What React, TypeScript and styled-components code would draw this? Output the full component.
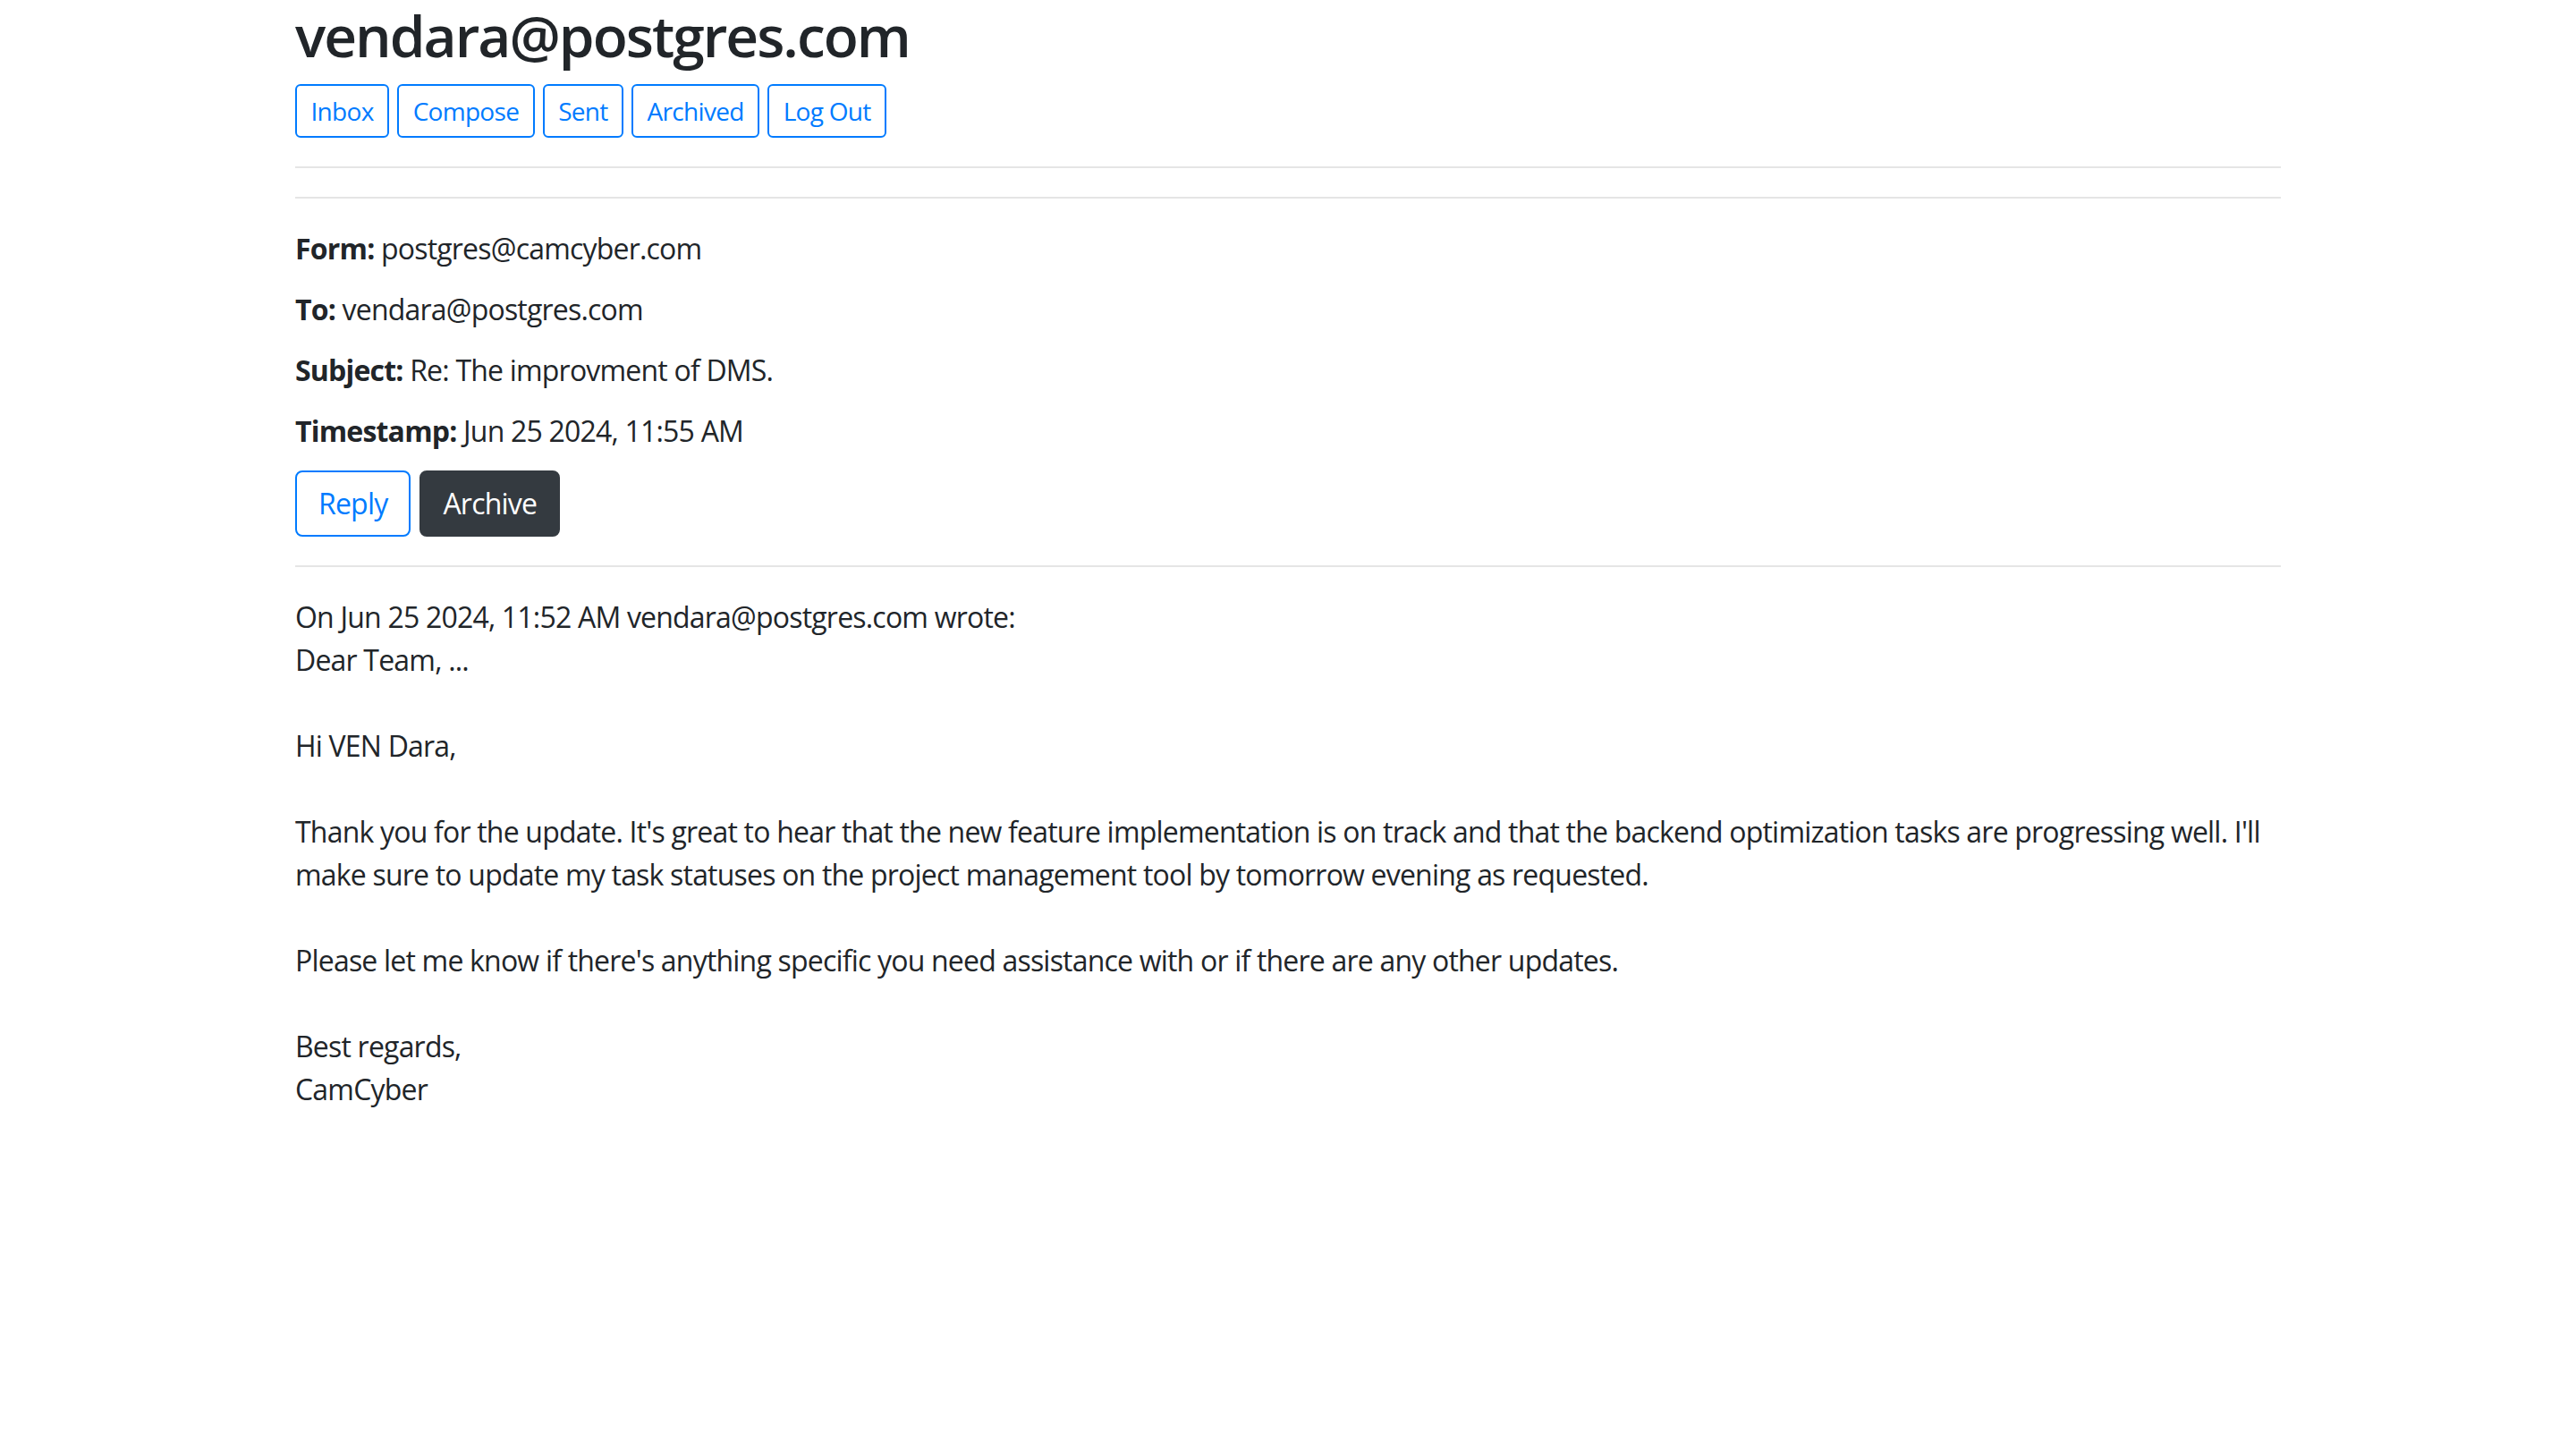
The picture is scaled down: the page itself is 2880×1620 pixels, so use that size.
import styled, { createGlobalStyle } from "styled-components";

const GlobalStyle = createGlobalStyle`
  body {
    margin: 0;
    background: #fff;
    color: #212529;
    font-family: "Open Sans", "Noto Sans", sans-serif;
    font-size: 32px;
    line-height: 48px;
    letter-spacing: -0.8px;
  }
  * {
    box-sizing: border-box;
  }
`;

const App = () => {
  const navItems = ["Inbox", "Compose", "Sent", "Archived", "Log Out"];

  const message = {
    from: "postgres@camcyber.com",
    to: "vendara@postgres.com",
    subject: "Re: The improvment of DMS.",
    timestamp: "Jun 25 2024, 11:55 AM",
    body: `On Jun 25 2024, 11:52 AM vendara@postgres.com wrote:
Dear Team, ...

Hi VEN Dara,

Thank you for the update. It's great to hear that the new feature implementation is on track and that the backend optimization tasks are progressing well. I'll make sure to update my task statuses on the project management tool by tomorrow evening as requested.

Please let me know if there's anything specific you need assistance with or if there are any other updates.

Best regards,
CamCyber`,
  };

  return (
    <Container>
      <GlobalStyle />
      <Title>vendara@postgres.com</Title>
      <Nav>
        {navItems.map((item) => (
          <NavButton key={item}>{item}</NavButton>
        ))}
      </Nav>
      <Divider />
      <Divider />
      <Meta>
        <Label>Form:</Label> {message.from}
      </Meta>
      <Meta>
        <Label>To:</Label> {message.to}
      </Meta>
      <Meta>
        <Label>Subject:</Label> {message.subject}
      </Meta>
      <Meta>
        <Label>Timestamp:</Label> {message.timestamp}
      </Meta>
      <Actions>
        <ActionButton>Reply</ActionButton>
        <ActionButton $dark>Archive</ActionButton>
      </Actions>
      <Divider />
      <Body>{message.body}</Body>
    </Container>
  );
};

const Container = styled.div`
  width: 2220px;
  margin: 0 auto;
`;

const Title = styled.h1`
  margin: 1px 0 16px;
  font-size: 64px;
  font-weight: 600;
  line-height: 77px;
  letter-spacing: -2px;
`;

const Nav = styled.div`
  display: flex;
  gap: 9px;
`;

const NavButton = styled.button`
  padding: 7px 15.5px;
  border: 2px solid #007bff;
  border-radius: 6px;
  background: transparent;
  color: #007bff;
  font-family: inherit;
  font-size: 28px;
  line-height: 42px;
  letter-spacing: -0.7px;
  cursor: pointer;
`;

const Divider = styled.hr`
  margin: 32px 0;
  border: 0;
  border-top: 2px solid rgba(0, 0, 0, 0.1);
`;

const Meta = styled.p`
  margin: 0 0 20px;
`;

const Label = styled.strong`
  font-weight: 700;
`;

const Actions = styled.div`
  display: flex;
  gap: 10px;
`;

const ActionButton = styled.button<{ $dark?: boolean }>`
  padding: 11px 24px;
  border: 2px solid ${(p) => (p.$dark ? "#343a40" : "#007bff")};
  border-radius: 8px;
  background: ${(p) => (p.$dark ? "#343a40" : "transparent")};
  color: ${(p) => (p.$dark ? "#fff" : "#007bff")};
  font-family: inherit;
  font-size: 32px;
  line-height: 48px;
  letter-spacing: -0.8px;
  cursor: pointer;
`;

const Body = styled.div`
  white-space: pre-wrap;
`;

export default App;
